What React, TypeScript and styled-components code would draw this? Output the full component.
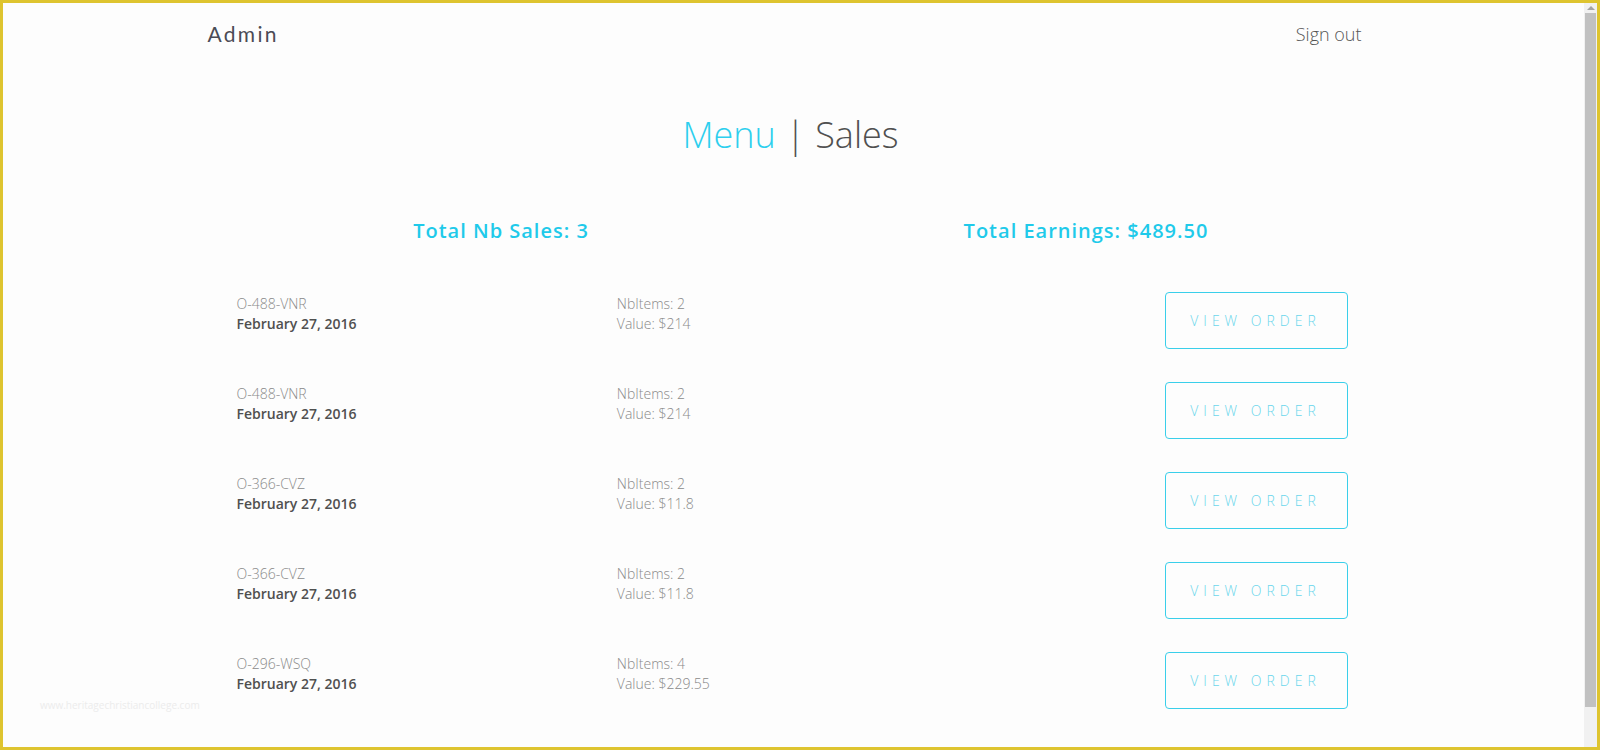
import styled, { createGlobalStyle } from 'styled-components'

const GlobalStyle = createGlobalStyle`
  html, body {
    margin: 0;
    padding: 0;
    background: #fdfdfd;
    font-family: 'Open Sans', 'Liberation Sans', sans-serif;
  }
  * {
    box-sizing: border-box;
  }
`

const Frame = styled.div`
  position: relative;
  width: 1600px;
  height: 750px;
  border: 3px solid #dec42f;
  display: flex;
  overflow: hidden;
  background: #fdfdfd;
`

const Main = styled.main`
  flex: 1;
  display: flex;
  flex-direction: column;
`

const Scrollbar = styled.div`
  width: 13px;
  background: #f1f1f1;
  display: flex;
  flex-direction: column;
  align-items: center;
`

const ScrollArrow = styled.div`
  height: 10px;
  display: flex;
  align-items: center;
  justify-content: center;
  &::before {
    content: '';
    border-left: 4px solid transparent;
    border-right: 4px solid transparent;
    border-bottom: 4px solid #a3a3a3;
  }
`

const ScrollThumb = styled.div`
  width: 11px;
  height: 694px;
  background: #c1c1c1;
`

const Container = styled.div`
  width: 1170px;
  margin: 0 auto;
`

const Nav = styled(Container)`
  height: 61px;
  display: flex;
  align-items: center;
  justify-content: space-between;
`

const Brand = styled.a`
  font-family: Lato, 'Open Sans', sans-serif;
  font-size: 21px;
  letter-spacing: 2.3px;
  color: #4b4b55;
  text-decoration: none;
  margin-left: -1px;
`

const SignOut = styled.a`
  font-size: 18px;
  font-weight: 300;
  color: #555;
  margin-right: 17px;
  text-decoration: none;
`

const Title = styled.h1`
  margin: 49px 0 0;
  padding-right: 6px;
  text-align: center;
  font-size: 36px;
  line-height: 44px;
  font-weight: 300;
  color: #505050;
`

const TitleLink = styled.span<{ $active?: boolean }>`
  color: ${(p) => (p.$active ? '#2dcfee' : '#505050')};
`

const Divider = styled.span`
  margin: 0 10px;
  color: #505050;
`

const Totals = styled(Container)`
  margin-top: 60px;
  display: grid;
  grid-template-columns: 1fr 1fr;
`

const TotalLabel = styled.h3`
  margin: 0;
  text-align: center;
  font-size: 20px;
  line-height: 28px;
  font-weight: 600;
  letter-spacing: 1px;
  color: #1fcaea;
`

const OrderList = styled(Container)`
  margin-top: 47px;
  padding: 0 31px 0 28px;
  list-style: none;
`

const OrderRow = styled.li`
  display: grid;
  grid-template-columns: repeat(3, 1fr);
  column-gap: 30px;
  align-items: start;
  padding-bottom: 33px;
  font-size: 14px;
  line-height: 20px;
`

const OrderInfo = styled.div`
  padding-top: 2px;
`

const Light = styled.div`
  font-weight: 300;
  color: #8a8a8a;
`

const OrderDate = styled.div`
  font-weight: 600;
  color: #505050;
`

const ViewButton = styled.button`
  justify-self: end;
  width: 183px;
  height: 57px;
  border: 1px solid #3acfea;
  border-radius: 4px;
  background: transparent;
  font-family: 'Open Sans', sans-serif;
  font-size: 14px;
  font-weight: 300;
  letter-spacing: 5px;
  padding-left: 5px;
  color: #6ad6ec;
  cursor: pointer;
`

const Watermark = styled.div`
  position: absolute;
  left: 37px;
  top: 695px;
  font-size: 10px;
  color: #ececec;
`

type Order = {
  id: string
  date: string
  items: number
  value: string
}

const orders: Order[] = [
  { id: 'O-488-VNR', date: 'February 27, 2016', items: 2, value: '$214' },
  { id: 'O-488-VNR', date: 'February 27, 2016', items: 2, value: '$214' },
  { id: 'O-366-CVZ', date: 'February 27, 2016', items: 2, value: '$11.8' },
  { id: 'O-366-CVZ', date: 'February 27, 2016', items: 2, value: '$11.8' },
  { id: 'O-296-WSQ', date: 'February 27, 2016', items: 4, value: '$229.55' },
]

function App() {
  return (
    <Frame>
      <GlobalStyle />
      <Main>
        <Nav>
          <Brand>Admin</Brand>
          <SignOut>Sign out</SignOut>
        </Nav>

        <Title>
          <TitleLink $active>Menu</TitleLink>
          <Divider>|</Divider>
          <TitleLink>Sales</TitleLink>
        </Title>

        <Totals>
          <TotalLabel>Total Nb Sales: 3</TotalLabel>
          <TotalLabel>Total Earnings: $489.50</TotalLabel>
        </Totals>

        <OrderList as="ul">
          {orders.map((order, i) => (
            <OrderRow key={i}>
              <OrderInfo>
                <Light>{order.id}</Light>
                <OrderDate>{order.date}</OrderDate>
              </OrderInfo>
              <OrderInfo>
                <Light>NbItems: {order.items}</Light>
                <Light>Value: {order.value}</Light>
              </OrderInfo>
              <ViewButton>VIEW ORDER</ViewButton>
            </OrderRow>
          ))}
        </OrderList>
      </Main>
      <Scrollbar>
        <ScrollArrow />
        <ScrollThumb />
      </Scrollbar>
      <Watermark>www.heritagechristiancollege.com</Watermark>
    </Frame>
  )
}

export default App
